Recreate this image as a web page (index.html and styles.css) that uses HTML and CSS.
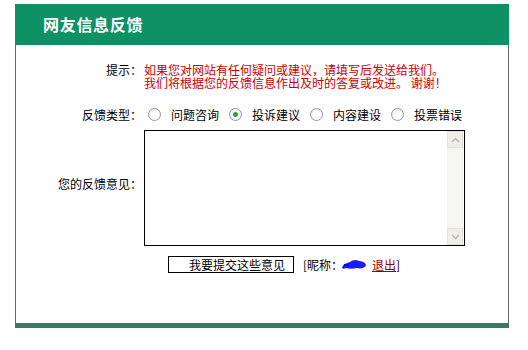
FILE: index.html
```html
<!DOCTYPE html>
<html lang="zh-CN">
<head>
    <meta charset="UTF-8">
    <title>网友信息反馈</title>
    <link rel="stylesheet" href="styles.css">
</head>
<body>
    <div class="panel">
        <div class="panel-head">网友信息反馈</div>

        <form class="panel-body">
            <!-- 提示 -->
            <div class="row row-top">
                <span class="label">提示：</span>
                <div class="hint">
                    <div class="hint-line">如果您对网站有任何疑问或建议，请填写后发送给我们。</div>
                    <div class="hint-line">我们将根据您的反馈信息作出及时的答复或改进。 谢谢！</div>
                </div>
            </div>

            <!-- 类型 -->
            <div class="row types">
                <span class="label">反馈类型：</span>
                <input type="radio" name="type" id="t1"><label for="t1">问题咨询</label>
                <input type="radio" name="type" id="t2" checked><label for="t2">投诉建议</label>
                <input type="radio" name="type" id="t3"><label for="t3">内容建设</label>
                <input type="radio" name="type" id="t4"><label for="t4">投票错误</label>
            </div>

            <!-- 内容 -->
            <div class="row">
                <span class="label">您的反馈意见：</span>
                <div class="memo">
                    <textarea class="memo-text"></textarea>
                    <div class="scrollbar">
                        <span class="sb-btn">
                            <svg width="9" height="6" viewBox="0 0 9 6"><polyline points="1,5 4.5,1.5 8,5" fill="none" stroke="#b8b8ae" stroke-width="1.5"/></svg>
                        </span>
                        <span class="sb-track"></span>
                        <span class="sb-btn">
                            <svg width="9" height="6" viewBox="0 0 9 6"><polyline points="1,1 4.5,4.5 8,1" fill="none" stroke="#b8b8ae" stroke-width="1.5"/></svg>
                        </span>
                    </div>
                </div>
            </div>

            <!-- 提交 -->
            <div class="row submit-row">
                <span class="label"></span>
                <button type="button" class="submit">我要提交这些意见</button>
                <span class="user">[昵称：<svg class="blot" width="26" height="11" viewBox="0 0 26 11">
                    <path d="M1 8 C3 5 6 4 9 3 C11 1 15 0 18 2 C21 2 24 3 25 6 C24 9 20 10 16 9 C12 10 8 10 5 9 C3 10 1 10 1 8 Z" fill="#1a1aff"/>
                    <path d="M3 6 C6 5 8 6 7 8" fill="none" stroke="#0000dd" stroke-width="1.5"/>
                </svg> <a href="#" class="logout">退出</a>]</span>
            </div>
        </form>

        <div class="panel-foot"></div>
    </div>
</body>
</html>
```

FILE: styles.css
```css
body {
    margin: 0;
    background: #fff;
    font-family: "Noto Sans CJK SC", "Liberation Sans", sans-serif;
    font-size: 12px;
    color: #000;
}
.panel {
    width: 494px;
    margin: 4px 0 0 15px;
}
.panel-head {
    height: 41px;
    line-height: 41px;
    padding-left: 28px;
    background-color: #0e9165;
    color: #fff;
    font-size: 16px;
    font-weight: bold;
    letter-spacing: 0.7px;
}
.panel-body {
    height: 260px;
    margin: 0;
    padding-top: 18px;
    border-left: 1px solid #6a6a6a;
    border-right: 1px solid #6a6a6a;
}
.panel-foot {
    height: 5px;
    background-color: #367b65;
}
.row {
    display: flex;
    align-items: center;
    line-height: 13px;
}
.row-top {
    align-items: flex-start;
}
.label {
    flex: none;
    width: 126px;
    padding-right: 2px;
    text-align: right;
}
.hint {
    color: #cc0000;
}
.hint-line {
    height: 12px;
    line-height: 13px;
}
.hint-line + .hint-line {
    margin-top: 1px;
}
.types {
    margin-top: 19px;
    height: 14px;
}
.types input {
    -webkit-appearance: none;
    appearance: none;
    width: 13px;
    height: 13px;
    margin: 0 10px 0 0;
    border: 1px solid #8d99a8;
    border-radius: 50%;
    background: radial-gradient(circle at 60% 65%, #fff 40%, #dde0e5 100%);
}
.types input:first-of-type {
    margin-left: 4px;
}
.types input:checked {
    background: radial-gradient(circle, #2f9e38 0, #2f9e38 2px, #bfe3bf 2.6px, #fff 3.6px, #fff 45%, #dde0e5 100%);
}
.types label {
    margin-right: 10px;
}
.memo {
    display: flex;
    width: 319px;
    height: 114px;
    margin-top: 9px;
    border: 1px solid #000;
}
.memo-text {
    flex: 1;
    border: none;
    outline: none;
    resize: none;
    padding: 0;
    font: inherit;
}
.scrollbar {
    display: flex;
    flex-direction: column;
    width: 16px;
    margin-right: 1px;
    background: #f6f6f0;
}
.sb-btn {
    display: flex;
    align-items: center;
    justify-content: center;
    height: 15px;
    border: 1px solid #e2e2d8;
    background: #efefe8;
}
.sb-track {
    flex: 1;
}
.submit-row {
    margin-top: 10px;
}
.submit {
    width: 126px;
    height: 17px;
    margin-left: 24px;
    padding: 0 0 0 20px;
    border: 1px solid #000;
    background: #fff;
    font: inherit;
    line-height: 15px;
    text-align: left;
    color: #000;
}
.user {
    margin-left: 9px;
    display: flex;
    align-items: center;
}
.blot {
    margin-left: -2px;
}
.logout {
    margin-left: 5px;
    color: #990000;
}
```
